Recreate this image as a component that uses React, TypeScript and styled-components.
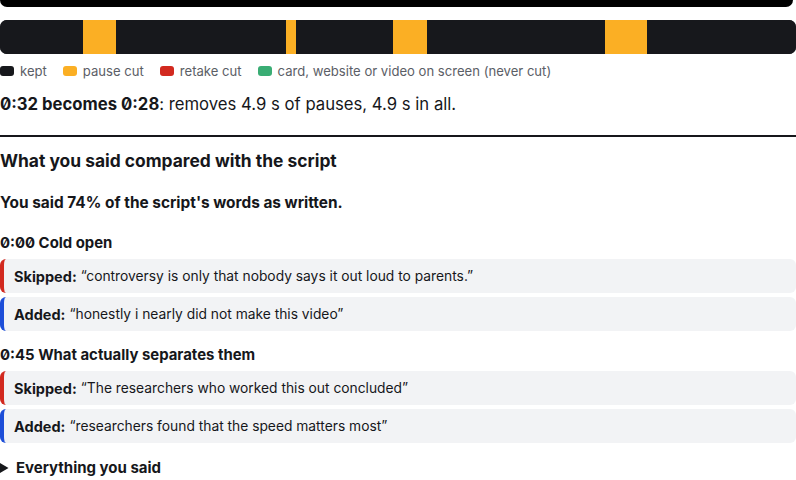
import React from 'react';
import styled, { createGlobalStyle } from 'styled-components';

const GlobalStyle = createGlobalStyle`
  html, body {
    margin: 0;
    padding: 0;
    background: #fff;
  }
  body {
    font-family: Inter, "Noto Sans", "DejaVu Sans", sans-serif;
    color: #16171b;
    font-feature-settings: "zero" 1;
  }
`

const Page = styled.div`
  width: 796px;
  display: flex;
  flex-direction: column;
`

const PlayerEdge = styled.div`
  height: 7px;
  width: 793px;
  background: #000;
  border-radius: 0 0 7px 7px;
`

const Timeline = styled.div`
  margin-top: 13px;
  height: 34px;
  display: flex;
  border-radius: 7px;
  overflow: hidden;
  background: #17181c;
`

const Segment = styled.div<{ $kind: Kind }>`
  height: 100%;
  background: ${(p) => COLORS[p.$kind]};
`

const Legend = styled.div`
  display: flex;
  align-items: center;
  gap: 16px;
  margin-top: 8px;
  font-size: 13.1px;
  line-height: 18px;
  color: #5b5e66;
`

const LegendItem = styled.span`
  display: flex;
  align-items: center;
  gap: 6px;
`

const Swatch = styled.span<{ $kind: Kind }>`
  width: 14px;
  height: 10px;
  border-radius: 3px;
  background: ${(p) => COLORS[p.$kind]};
`

const Summary = styled.p`
  margin: 12px 0 0;
  font-size: 16.7px;
  line-height: 24px;

  b {
    font-weight: 700;
  }
`

const Divider = styled.hr`
  margin: 19px 0 0;
  border: none;
  border-top: 2px solid #16171b;
`

const Heading = styled.h2`
  margin: 12px 0 0;
  font-size: 17.4px;
  line-height: 24px;
  font-weight: 700;
`

const Score = styled.p`
  margin: 20px 0 0;
  font-size: 15.4px;
  line-height: 20px;
  font-weight: 700;
`

const SectionTitle = styled.h3<{ $first?: boolean }>`
  margin: ${(p) => (p.$first ? '20px' : '14px')} 0 6px;
  font-size: 14.9px;
  line-height: 20px;
  font-weight: 700;
`

const Diffs = styled.div`
  display: flex;
  flex-direction: column;
  gap: 4px;
`

const DiffRow = styled.div<{ $type: 'skipped' | 'added' }>`
  height: 34px;
  box-sizing: border-box;
  display: flex;
  align-items: center;
  padding: 0 10px;
  background: #f2f3f5;
  border-left: 4px solid ${(p) => (p.$type === 'skipped' ? '#d2291f' : '#1d4ed8')};
  border-radius: 6px;
  font-size: 13.8px;

  b {
    font-size: 14.5px;
    font-weight: 700;
    margin-right: 4px;
  }
`

const Details = styled.details`
  margin-top: 15px;
  font-size: 15px;
  line-height: 20px;
  font-weight: 700;

  summary {
    cursor: pointer;
  }
`

type Kind = 'kept' | 'pause' | 'retake' | 'card';

const COLORS: Record<Kind, string> = {
  kept: '#17181c',
  pause: '#fbaf24',
  retake: '#d2291f',
  card: '#3aad74',
};

// widths in px along the 796px strip
const segments: { kind: Kind; w: number }[] = [
  { kind: 'kept', w: 83 },
  { kind: 'pause', w: 33 },
  { kind: 'kept', w: 170 },
  { kind: 'pause', w: 10 },
  { kind: 'kept', w: 97 },
  { kind: 'pause', w: 34 },
  { kind: 'kept', w: 178 },
  { kind: 'pause', w: 42 },
  { kind: 'kept', w: 149 },
];

const sections = [
  {
    title: '0:00 Cold open',
    diffs: [
      { type: 'skipped' as const, text: 'controversy is only that nobody says it out loud to parents.' },
      { type: 'added' as const, text: 'honestly i nearly did not make this video' },
    ],
  },
  {
    title: '0:45 What actually separates them',
    diffs: [
      { type: 'skipped' as const, text: 'The researchers who worked this out concluded' },
      { type: 'added' as const, text: 'researchers found that the speed matters most' },
    ],
  },
];

export default function App() {
  return (
    <>
      <GlobalStyle />
      <Page>
        <PlayerEdge />
        <Timeline>
          {segments.map((s, i) => (
            <Segment key={i} $kind={s.kind} style={{ width: s.w }} />
          ))}
        </Timeline>
        <Legend>
          <LegendItem><Swatch $kind="kept" />kept</LegendItem>
          <LegendItem><Swatch $kind="pause" />pause cut</LegendItem>
          <LegendItem><Swatch $kind="retake" />retake cut</LegendItem>
          <LegendItem><Swatch $kind="card" />card, website or video on screen (never cut)</LegendItem>
        </Legend>
        <Summary>
          <b>0:32 becomes 0:28</b>: removes 4.9 s of pauses, 4.9 s in all.
        </Summary>
        <Divider />
        <Heading>What you said compared with the script</Heading>
        <Score>You said 74% of the script's words as written.</Score>
        {sections.map((sec, si) => (
          <React.Fragment key={sec.title}>
            <SectionTitle $first={si === 0}>{sec.title}</SectionTitle>
            <Diffs>
              {sec.diffs.map((d, i) => (
                <DiffRow key={i} $type={d.type}>
                  <b>{d.type === 'skipped' ? 'Skipped:' : 'Added:'}</b>
                  {'\u201C' + d.text + '\u201D'}
                </DiffRow>
              ))}
            </Diffs>
          </React.Fragment>
        ))}
        <Details>
          <summary>Everything you said</summary>
        </Details>
      </Page>
    </>
  );
}
